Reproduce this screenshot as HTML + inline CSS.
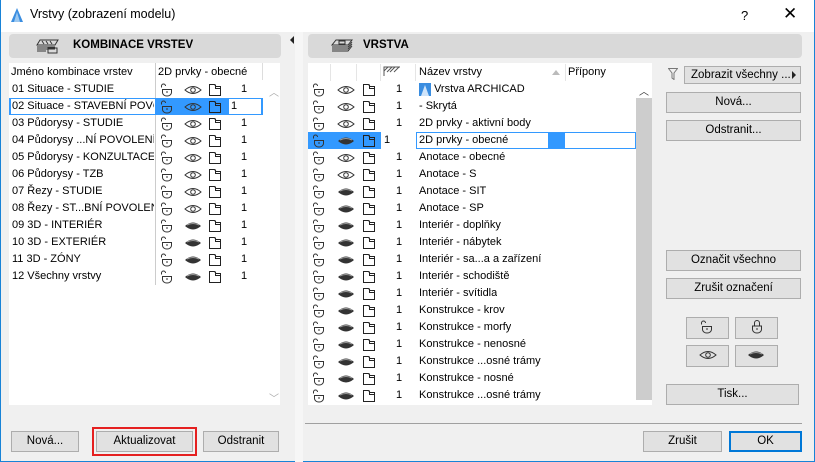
<!DOCTYPE html><html><head><meta charset="utf-8"><style>
*{box-sizing:border-box;margin:0;padding:0}
body{width:815px;height:462px;overflow:hidden;background:#f0f0f0;font-family:"Segoe UI","Liberation Sans",sans-serif;font-size:11px;color:#000;position:relative}
.a{position:absolute}
.win{left:0;top:0;width:815px;height:462px;border:1px solid #1883d7;border-top:none}
.tb{left:1px;top:0;width:813px;height:32px;background:#fff}
.hdr{background:#d9d9d9;border-radius:4px;font-weight:bold}
.btn{position:absolute;background:#e1e1e1;border:1px solid #adadad;text-align:center;font-size:11.5px;line-height:19px}
.row{position:absolute;height:17px;line-height:17px;white-space:nowrap;overflow:hidden}
svg{position:absolute}
</style></head><body>
<div class="a win"></div>
<div class="a tb"></div>
<svg style="left:10px;top:7px" width="14" height="16" viewBox="0 0 14 16"><path d="M1 15 L7 1 L13 15 Z" fill="#3a8de0"/><path d="M4 15 L7 5 L10 15Z" fill="#9cc8f0"/></svg>
<div class="a" style="left:30px;top:7px;font-size:12.5px">Vrstvy (zobrazení modelu)</div>
<div class="a" style="left:741px;top:8px;font-size:13px">?</div>
<div class="a" style="left:783px;top:4px;font-size:17px;font-weight:300">✕</div>

<div class="a hdr" style="left:9px;top:34px;width:272px;height:24px"></div>
<svg style="left:34px;top:38px" width="28" height="16" viewBox="0 0 28 16" fill="none" stroke="#333" stroke-width="1"><path d="M6 2h18l-3 5H3z"/><path d="M3 9h18M3 11h18M3 13h9"/><path d="M8 3l2 3M12 3l2 3M16 3l2 3"/><rect x="14" y="10" width="9" height="5"/></svg>
<div class="a" style="left:73px;top:39px;font-weight:bold;font-size:11.5px">KOMBINACE VRSTEV</div>
<div class="a" style="left:290px;top:36px;width:0;height:0;border-top:4px solid transparent;border-bottom:4px solid transparent;border-right:4px solid #222"></div>
<div class="a" style="left:295px;top:32px;width:8px;height:430px;background:#f6f6f6"></div>

<div class="a" style="left:9px;top:63px;width:271px;height:342px;background:#fff"></div>
<div class="a" style="left:155px;top:63px;width:1px;height:222px;background:#ccc"></div>
<div class="a" style="left:262px;top:63px;width:1px;height:17px;background:#ddd"></div>
<div class="row" style="left:11px;top:64px">Jméno kombinace vrstev</div>
<div class="row" style="left:158px;top:64px">2D prvky - obecné</div>
<div class="a" style="left:269px;top:84px;color:#aaa;font-size:10px">︿</div>
<div class="a" style="left:269px;top:390px;color:#aaa;font-size:10px">﹀</div>
<div id="L"></div>

<div class="a hdr" style="left:308px;top:34px;width:494px;height:24px"></div>
<svg style="left:330px;top:38px" width="24" height="16" viewBox="0 0 24 16" fill="none" stroke="#333"><path d="M6 2h16l-4 5H2z"/><path d="M2 9h16l4-5M2 11h16l4-5M2 13h16l4-5"/><rect x="9" y="3" width="6" height="3"/></svg>
<div class="a" style="left:363px;top:39px;font-weight:bold;font-size:11.5px">VRSTVA</div>

<div class="a" style="left:308px;top:63px;width:344px;height:342px;background:#fff"></div>
<div class="a" style="left:636px;top:98px;width:16px;height:302px;background:#cdcdcd"></div>
<div class="a" style="left:639px;top:83px;color:#333;font-size:10px">︿</div>
<div class="a" style="left:330px;top:64px;width:1px;height:17px;background:#e5e5e5"></div>
<div class="a" style="left:356px;top:64px;width:1px;height:17px;background:#e5e5e5"></div>
<div class="a" style="left:380px;top:64px;width:1px;height:17px;background:#e5e5e5"></div>
<div class="a" style="left:415px;top:64px;width:1px;height:17px;background:#e5e5e5"></div>
<div class="a" style="left:565px;top:64px;width:1px;height:17px;background:#e5e5e5"></div>
<svg style="left:383px;top:66px" width="18" height="10" viewBox="0 0 18 10" fill="none" stroke="#555"><path d="M1 10V1h16M1 5l4-4M4 6l5-5M7 6l5-5M11 6l5-5"/></svg>
<div class="row" style="left:419px;top:64px">Název vrstvy</div>
<div class="a" style="left:552px;top:70px;width:0;height:0;border-left:4px solid transparent;border-right:4px solid transparent;border-bottom:5px solid #bbb"></div>
<div class="row" style="left:568px;top:64px">Přípony</div>
<div id="R"></div>

<svg style="left:668px;top:68px" width="10" height="12" viewBox="0 0 10 12" fill="none" stroke="#777"><path d="M0.5 0.5h9L6 5v6.5L4 10V5z"/></svg>
<div class="btn" style="left:684px;top:66px;width:117px;height:18px;line-height:16px;text-align:left;padding-left:6px">Zobrazit všechny ...</div>
<div class="a" style="left:792px;top:71px;border-top:4px solid transparent;border-bottom:4px solid transparent;border-left:4px solid #222"></div>
<div class="btn" style="left:666px;top:92px;width:135px;height:21px">Nová...</div>
<div class="btn" style="left:666px;top:120px;width:135px;height:21px">Odstranit...</div>
<div class="btn" style="left:666px;top:250px;width:135px;height:21px">Označit všechno</div>
<div class="btn" style="left:666px;top:278px;width:135px;height:21px">Zrušit označení</div>
<div class="btn" style="left:686px;top:317px;width:43px;height:22px"></div>
<div class="btn" style="left:735px;top:317px;width:43px;height:22px"></div>
<div class="btn" style="left:686px;top:345px;width:43px;height:22px"></div>
<div class="btn" style="left:735px;top:345px;width:43px;height:22px"></div>
<svg style="left:700px;top:320px" width="14" height="14" viewBox="0 0 14 14" fill="none" stroke="#333"><path d="M1.5 4.5V3a2 2 0 0 1 4 0M2.5 6.5h9v3a4.5 3.5 0 0 1-9 0z"/><path d="M7 8v2"/></svg>
<svg style="left:750px;top:319px" width="14" height="15" viewBox="0 0 14 15" fill="none" stroke="#333"><path d="M4.5 7V4a2.5 2.5 0 0 1 5 0v3M2.5 7h9v3.5a4.5 3.5 0 0 1-9 0z"/><path d="M7 9v2"/></svg>
<svg style="left:699px;top:350px" width="18" height="10" viewBox="0 0 18 10" fill="none" stroke="#333"><path d="M1 5Q9-2 17 5Q9 12 1 5z"/><circle cx="9" cy="5" r="2.3"/></svg>
<svg style="left:747px;top:350px" width="18" height="10" viewBox="0 0 18 10"><path d="M1 5Q9-2 17 5Q9 12 1 5z" fill="#333"/><path d="M3 4Q9 1 15 4" stroke="#999" fill="none"/></svg>
<div class="btn" style="left:666px;top:384px;width:133px;height:21px">Tisk...</div>

<div class="a" style="left:305px;top:423px;width:497px;height:1px;background:#a0a0a0"></div>
<div class="btn" style="left:643px;top:431px;width:79px;height:21px">Zrušit</div>
<div class="btn" style="left:729px;top:431px;width:73px;height:21px;border:2px solid #0078d7;line-height:17px">OK</div>

<div class="btn" style="left:11px;top:431px;width:68px;height:21px">Nová...</div>
<div class="a" style="left:92px;top:427px;width:105px;height:29px;border:2px solid #e52020"></div>
<div class="btn" style="left:96px;top:431px;width:97px;height:21px">Aktualizovat</div>
<div class="btn" style="left:203px;top:431px;width:76px;height:21px">Odstranit</div>

<script>
const lockO='<path d="M1.5 4.5V3a2 2 0 0 1 4 0" fill="none" stroke="#333"/><path d="M2.5 6.5h9v3a4.5 3.5 0 0 1-9 0z" fill="none" stroke="#333"/><path d="M7 8v2" stroke="#333"/>';
const eye='<path d="M1 5Q9-2 17 5Q9 12 1 5z" fill="none" stroke="#333"/><circle cx="9" cy="5" r="2.3" fill="none" stroke="#333"/>';
const eyeC='<path d="M1 5Q9-2 17 5Q9 12 1 5z" fill="#333"/><path d="M3 4Q9 1 15 4" stroke="#999" fill="none"/>';
const doc='<path d="M0.5 1.5h5l1.5 2h4.5v9h-11z M6.5 1.5v4h5" fill="none" stroke="#222"/>';
function ic(x,y,w,h,s){return `<svg style="left:${x}px;top:${y}px" width="${w}" height="${h}" viewBox="0 0 ${w} ${h}">${s}</svg>`}
const Ln=["01 Situace - STUDIE","02 Situace - STAVEBNÍ POVO","03 Půdorysy - STUDIE","04 Půdorysy ...NÍ POVOLENÍ","05 Půdorysy - KONZULTACE","06 Půdorysy - TZB","07 Řezy - STUDIE","08 Řezy - ST...BNÍ POVOLENÍ","09 3D - INTERIÉR","10 3D - EXTERIÉR","11 3D - ZÓNY","12 Všechny vrstvy"];
let h='';
Ln.forEach((n,i)=>{const y=81+i*17;const sel=i==1;const closed=i>=8;
if(sel){h+=`<div class="a" style="left:9px;top:${y}px;width:254px;height:17px;background:#3399ff"></div><div class="a" style="left:10px;top:${y}px;width:146px;height:17px;background:#fff;border:1px solid #3399ff"></div><div class="a" style="left:229px;top:${y}px;width:33px;height:17px;background:#fff;border:1px solid #3399ff;border-left:none"></div>`}
h+=`<div class="row" style="left:12px;top:${y}px;width:142px">${n}</div>`;
h+=ic(160,y+2,14,14,lockO)+ic(184,y+4,18,10,closed?eyeC:eye)+ic(209,y+2,13,14,doc);
h+=`<div class="row" style="left:${sel?231:241}px;top:${y}px">1</div>`});
document.getElementById('L').innerHTML=h;
const Rn=["Vrstva ARCHICAD","- Skrytá","2D prvky - aktivní body","2D prvky - obecné","Anotace - obecné","Anotace - S","Anotace - SIT","Anotace - SP","Interiér - doplňky","Interiér - nábytek","Interiér - sa...a a zařízení","Interiér - schodiště","Interiér - svítidla","Konstrukce - krov","Konstrukce - morfy","Konstrukce - nenosné","Konstrukce ...osné trámy","Konstrukce - nosné","Konstrukce ...osné trámy"];
h='';
Rn.forEach((n,i)=>{const y=81+i*17;const sel=i==3;const closed=i==3||i>=6;
if(sel){h+=`<div class="a" style="left:308px;top:${y}px;width:328px;height:17px;background:#3399ff"></div><div class="a" style="left:381px;top:${y}px;width:35px;height:17px;background:#fff"></div><div class="a" style="left:416px;top:${y}px;width:220px;height:17px;background:#fff;border:1px solid #3399ff"></div><div class="a" style="left:548px;top:${y+1}px;width:17px;height:15px;background:#3399ff"></div>`}
h+=ic(312,y+2,14,14,lockO)+ic(337,y+4,18,10,closed?eyeC:eye)+ic(363,y+2,13,14,doc);
h+=`<div class="row" style="left:${sel?384:396}px;top:${y}px">1</div>`;
if(i==0)h+=ic(419,y+2,12,13,'<rect width="12" height="13" fill="#3a8de0"/><path d="M2 13L6 2l4 11" fill="#cfe4fa"/>');
h+=`<div class="row" style="left:${i==0?434:419}px;top:${y}px">${n}</div>`});
document.getElementById('R').innerHTML=h;
</script>
</body></html>
